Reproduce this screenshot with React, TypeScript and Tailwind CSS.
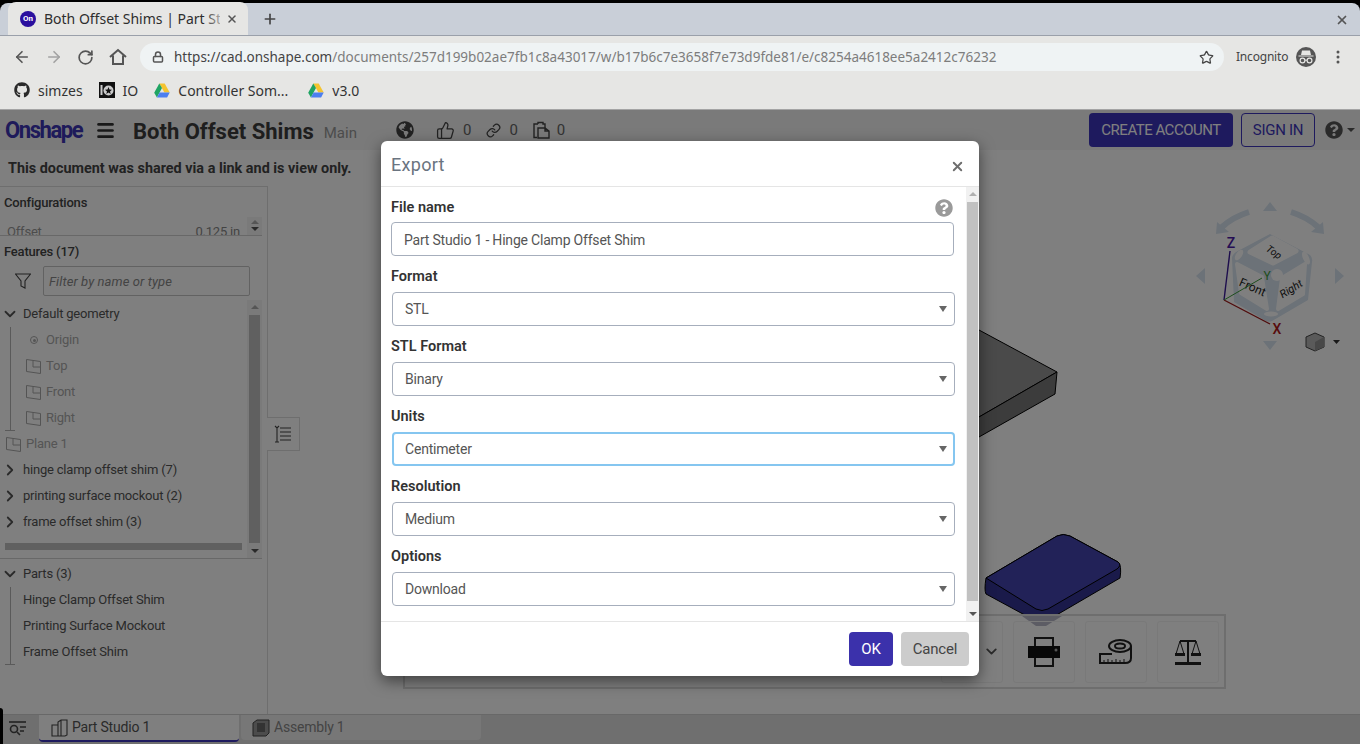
import React from "react";
import { ArrowLeft, ArrowRight, RotateCw, Lock, Star, X, Plus, ThumbsUp, Link as LinkIcon, ChevronDown, ChevronRight, Menu } from "lucide-react";
import { FaGithub, FaQuestionCircle, FaGlobeAmericas } from "react-icons/fa";

const chromeFont = "font-['Noto_Sans',sans-serif]";

function Drive() {
  return (
    <svg width="16" height="15" viewBox="0 0 16 15">
      <polygon points="5.3,0.5 10.7,0.5 15.7,9.5 10.4,9.5" fill="#f4c430" />
      <polygon points="5.3,0.5 8,5 2.9,14.5 0.2,9.8" fill="#1fa463" />
      <polygon points="5.6,9.5 15.7,9.5 13.1,14.5 2.9,14.5" fill="#4c7ff0" />
    </svg>
  );
}

function TabBar() {
  return (
    <div className="h-[33px] bg-[#c9cfd8] rounded-t-[8px] flex items-end relative border-b border-[#9aa0aa]">
      <div className="ml-[8px] w-[240px] h-[33px] bg-[#e6e6e4] rounded-t-[8px] flex items-center relative pl-[12px]">
        <div className="w-[16px] h-[16px] rounded-full bg-[#2a0f9e] text-white text-[8px] font-bold flex items-center justify-center font-['Roboto',sans-serif]">On</div>
        <span className="ml-[8px] w-[176px] overflow-hidden whitespace-nowrap text-[14px] text-[#2e2e2e]">Both Offset Shims | Part Studio 1</span>
        <div className="absolute left-[196px] top-0 w-[24px] h-[33px] bg-gradient-to-r from-transparent to-[#e6e6e4]" />
        <X size={12} strokeWidth={3} className="ml-[6px] text-[#555]" />
      </div>
      <Plus size={16} strokeWidth={2.5} className="ml-[14px] mb-[8px] text-[#444]" />
      <X size={14} strokeWidth={3} className="absolute right-[11px] top-[10px] text-[#555]" />
    </div>
  );
}

function AddressBar() {
  return (
    <div className="h-[36px] pt-[6px] bg-[#e6e6e4] flex items-center">
      <ArrowLeft size={18} strokeWidth={2.2} className="ml-[13px] text-[#555]" />
      <ArrowRight size={18} strokeWidth={2.2} className="ml-[14px] text-[#a2a2a2]" />
      <RotateCw size={17} strokeWidth={2.4} className="ml-[14px] text-[#555]" />
      <svg width="18" height="18" viewBox="0 0 18 18" fill="none" stroke="#555" strokeWidth="2" className="ml-[15px]">
        <path d="M1 9l8-7 8 7M4 7.500V16h10V7.500" />
      </svg>
      <div className="ml-[13px] w-[1084px] h-[28px] rounded-full bg-[#eff3f4] flex items-center relative">
        <Lock size={12} strokeWidth={3} className="ml-[12px] text-[#555]" />
        <span className="ml-[10px] text-[13.500px] whitespace-nowrap text-[#7d7d7d]"><span className="text-[#444]">https://cad.onshape.com</span>/documents/257d199b02ae7fb1c8a43017/w/b17b6c7e3658f7e73d9fde81/e/c8254a4618ee5a2412c76232</span>
        <Star size={15} strokeWidth={2} className="absolute right-[10px] text-[#444]" />
      </div>
      <span className="ml-[12px] w-[52px] text-[12px] tracking-[-0.2px] text-[#444] whitespace-nowrap">Incognito</span>
      <svg width="20" height="20" viewBox="0 0 20 20" className="ml-[8px]">
        <circle cx="10" cy="10" r="10" fill="#555" />
        <path d="M6 3.5h8l1 4.5H5z M2.500 8.500h15v1h-15z" fill="#e6e6e4" />
        <circle cx="6.500" cy="13.500" r="2.400" fill="none" stroke="#e6e6e4" strokeWidth="1.200" />
        <circle cx="13.500" cy="13.500" r="2.400" fill="none" stroke="#e6e6e4" strokeWidth="1.200" />
        <path d="M8.900 13.200h2.200" stroke="#e6e6e4" strokeWidth="1" />
      </svg>
      <svg width="4" height="14" viewBox="0 0 4 14" className="ml-[20px]">
        <circle cx="2" cy="2" r="1.500" fill="#555" />
        <circle cx="2" cy="7" r="1.500" fill="#555" />
        <circle cx="2" cy="12" r="1.500" fill="#555" />
      </svg>
    </div>
  );
}

function Bookmarks() {
  return (
    <div className="h-[38px] bg-[#e6e6e4] border-b border-[#a4a4a4] flex items-center text-[14px] text-[#333] pb-[1px]">
      <FaGithub size={16} className="ml-[14px] text-[#2a2a2a]" />
      <span className="ml-[8px]">simzes</span>
      <svg width="16" height="16" viewBox="0 0 16 16" className="ml-[16px]">
        <rect width="16" height="16" fill="#111" />
        <circle cx="9.500" cy="8.500" r="5" fill="#ccc" />
        <polygon points="9.500,5 10.500,7.600 13,7.800 11,9.500 11.700,12 9.500,10.600 7.300,12 8,9.500 6,7.800 8.500,7.600" fill="#111" />
        <rect x="1.500" y="3" width="2" height="10" fill="#ccc" />
      </svg>
      <span className="ml-[8px]">IO</span>
      <span className="ml-[16px]"><Drive /></span>
      <span className="ml-[8px] w-[110px] whitespace-nowrap">Controller Som...</span>
      <span className="ml-[20px]"><Drive /></span>
      <span className="ml-[8px]">v3.0</span>
    </div>
  );
}

function PageHeader() {
  return (
    <div className="h-[40px] bg-[#f4f4f4] flex items-center relative">
      <span className="ml-[5px] w-[80px] text-[24px] leading-[30px] font-bold tracking-[-1.6px] text-[#3c34b4] whitespace-nowrap scale-x-[0.92] origin-left">Onshape</span>
      <Menu size={21} strokeWidth={3} className="ml-[10px] text-[#333]" />
      <span className="ml-[17px] mt-[3px] text-[22px] leading-[28px] font-bold text-[#3c3c3c] whitespace-nowrap">Both Offset Shims</span>
      <span className="ml-[10px] mt-[6px] text-[15px] text-[#999]">Main</span>
      <FaGlobeAmericas size={18} className="ml-[39px] text-[#444]" />
      <ThumbsUp size={19} strokeWidth={1.6} className="ml-[22px] text-[#444]" />
      <span className="ml-[8px] text-[15px] text-[#666]">0</span>
      <LinkIcon size={15} strokeWidth={2} className="ml-[15px] text-[#444]" />
      <span className="ml-[8px] text-[15px] text-[#666]">0</span>
      <svg width="18" height="18" viewBox="0 0 18 18" fill="none" stroke="#444" strokeWidth="1.400" className="ml-[15px]">
        <path d="M4 16.500H1V3h4M5 3V1.500h5V3h2v4" />
        <path d="M5 7h7l4 3v7H5z M12 7v3h4" />
      </svg>
      <span className="ml-[6px] text-[15px] text-[#666]">0</span>
      <div className="ml-auto mr-[8px] w-[144px] h-[34px] rounded-[4px] bg-[#3c34bc] text-[#fff] text-[15px] tracking-[-0.5px] flex items-center justify-center">CREATE ACCOUNT</div>
      <div className="mr-[10px] w-[74px] h-[34px] rounded-[4px] border border-[#3c34bc] text-[#3c34bc] text-[15px] tracking-[-0.3px] flex items-center justify-center">SIGN IN</div>
      <FaQuestionCircle size={18} className="mr-[4px] text-[#555]" />
      <div className="mr-[5px] w-0 h-0 border-x-[4px] border-x-transparent border-t-[4px] border-t-[#555]" />
    </div>
  );
}

function PlaneIcon() {
  return (
    <svg width="15" height="15" viewBox="0 0 15 15" fill="none" stroke="#a8a8a8" strokeWidth="1">
      <path d="M0.500 0.500l14 2v12l-14-2z M7 1.500v6.500h7.500" />
    </svg>
  );
}

function Row({ children, className = "" }: { children: React.ReactNode; className?: string }) {
  return <div className={`h-[26px] flex items-center whitespace-nowrap ${className}`}>{children}</div>;
}

function Panel() {
  return (
    <div className="w-[268px] border-t border-r border-[#dcdcdc] relative flex flex-col text-[13px] tracking-[-0.2px] text-[#555]">
      <div className="h-[49px] border-b border-[#d0d0d0] w-[262px] relative overflow-hidden">
        <div className="ml-[4px] mt-[6px] font-medium text-[13px] text-[#444]">Configurations</div>
        <div className="absolute left-[7px] top-[35px] text-[#999] flex w-[233px] justify-between"><span>Offset</span><span className="text-[#888]">0.125 in</span></div>
        <div className="absolute right-0 top-[30px] w-[15px] h-[18px] bg-[#f4f4f4] flex flex-col items-center gap-[3px] pt-[3px]">
          <div className="w-0 h-0 border-x-[4px] border-x-transparent border-b-[4px] border-b-[#aaa]" />
          <div className="w-0 h-0 border-x-[4px] border-x-transparent border-t-[4px] border-t-[#555]" />
        </div>
      </div>
      <div className="h-[32px] ml-[4px] flex items-center font-medium text-[13px] text-[#444]">Features (17)</div>
      <div className="h-[35px] mt-[-5px] flex items-center">
        <svg width="16" height="16" viewBox="0 0 16 16" fill="none" stroke="#444" strokeWidth="1.100" className="ml-[15px]"><path d="M0.500 1h15L10 8v7l-4-2V8z" /></svg>
        <div className="ml-[12px] w-[207px] h-[30px] border border-[#c4c4c4] rounded-[2px] flex items-center pl-[5px] pt-[2px] italic tracking-[0.1px] text-[#888]">Filter by name or type</div>
      </div>
      <div className="w-[262px] h-[259px] mt-[2px] border-b border-[#d0d0d0] relative">
        <div className="pt-[1px]">
          <Row><ChevronDown size={18} strokeWidth={2.400} className="ml-[1px] mr-[4px] text-[#555]" />Default geometry</Row>
          <div className="relative text-[#aaa]">
            <div className="absolute left-[10px] top-0 h-[103px] w-px bg-[#b4b4b4]" />
            <div className="absolute left-[5px] top-[103px] w-[10px] h-px bg-[#b4b4b4]" />
            <Row className="pl-[30px]"><span className="w-[8px] h-[8px] rounded-full border border-[#aaa] mr-[8px] flex items-center justify-center"><span className="w-[3px] h-[3px] rounded-full bg-[#aaa]" /></span>Origin</Row>
            <Row className="pl-[26px]"><PlaneIcon /><span className="ml-[5px]">Top</span></Row>
            <Row className="pl-[26px]"><PlaneIcon /><span className="ml-[5px]">Front</span></Row>
            <Row className="pl-[26px]"><PlaneIcon /><span className="ml-[5px]">Right</span></Row>
            <Row className="pl-[6px]"><PlaneIcon /><span className="ml-[5px]">Plane 1</span></Row>
          </div>
          {["hinge clamp offset shim (7)", "printing surface mockout (2)", "frame offset shim (3)"].map((t) => (
            <Row key={t}><ChevronRight size={18} strokeWidth={2.400} className="ml-[1px] mr-[4px] text-[#555]" />{t}</Row>
          ))}
        </div>
        <div className="absolute left-[5px] top-[243px] w-[237px] h-[7px] bg-[#c1c1c1]" />
        <div className="absolute right-0 top-0 w-[15px] h-[258px] bg-[#f4f4f4] flex flex-col items-center justify-between py-[5px]">
          <div className="w-0 h-0 border-x-[4px] border-x-transparent border-b-[4px] border-b-[#aaa]" />
          <div className="w-[11px] h-[228px] bg-[#c1c1c1]" />
          <div className="w-0 h-0 border-x-[4px] border-x-transparent border-t-[4px] border-t-[#555]" />
        </div>
      </div>
      <div className="pt-[2px] relative">
        <Row><ChevronDown size={18} strokeWidth={2.400} className="ml-[1px] mr-[4px] text-[#555]" />Parts (3)</Row>
        <div className="relative">
          <div className="absolute left-[10px] top-0 h-[77px] w-px bg-[#b4b4b4]" />
          <div className="absolute left-[5px] top-[77px] w-[10px] h-px bg-[#b4b4b4]" />
          {["Hinge Clamp Offset Shim", "Printing Surface Mockout", "Frame Offset Shim"].map((t) => (
            <Row key={t} className="pl-[23px]">{t}</Row>
          ))}
        </div>
      </div>
      <div className="absolute left-[267px] top-[230px] w-[33px] h-[34px] bg-white border border-l-0 border-[#dcdcdc] flex items-center justify-center">
        <svg width="18" height="18" viewBox="0 0 18 18" fill="none" stroke="#444" strokeWidth="1.100"><path d="M1 1l2 2 2-2M3 3v14M1 17h4M6 3h11M6 7h11M6 11h11M6 15h11" /></svg>
      </div>
    </div>
  );
}

function Canvas() {
  return (
    <div className="flex-1 relative">
      <svg width="1092" height="528" viewBox="268 186 1092 528" className="absolute inset-0">
        <polygon points="900,290 979,330 1057,372 979,417 900,460" fill="#949494" stroke="#000" strokeWidth="1" />
        <polygon points="900,460 979,417 1057,372 1055,394 979,437 900,480" fill="#787878" stroke="#000" strokeWidth="1" />
        <path d="M986,578 L1057,536 Q1063,533 1070,536 L1118,562 Q1122,565 1120,578 L1048,620 Q1042,623 1034,620 L986,594 Q984,590 986,578 Z" fill="#343494" stroke="#000" strokeWidth="1" />
        <path d="M986,578 L1057,536 Q1063,533 1070,536 L1118,562 Q1122,565 1117,569 L1048,609 Q1042,612 1036,609 Z" fill="#4444b0" stroke="#000" strokeWidth="1" />
        <polygon points="1022,616 1062,616 1046,626 1036,626" fill="#b8b8c8" />
        <g fill="#d8e4f0">
          <polygon points="1270,202 1277,211 1263,211" />
          <polygon points="1270,350 1277,341 1263,341" />
          <polygon points="1196,276 1205,268 1205,284" />
          <polygon points="1344,276 1335,268 1335,284" />
          <polygon points="1216,234 1217,222 1229,232" />
          <polygon points="1324,234 1323,222 1311,232" />
        </g>
        <g fill="none" stroke="#d8e4f0" strokeWidth="6">
          <path d="M1249,212 Q1233,217 1222,227" />
          <path d="M1291,212 Q1307,217 1318,227" />
        </g>
        <path d="M1270,234 L1310,255 Q1313,258 1312,262 L1308,300 L1272,321 Q1270,322 1266,321 L1234,302 L1232,258 Q1232,255 1236,252 Z" fill="#d8e4f0" />
        <polygon points="1272,238 1296,251 1273,263 1250,252" fill="#ffffff" stroke="#ffffff" strokeWidth="5" strokeLinejoin="round" />
        <polygon points="1237,264 1262,277 1267,309 1241,293" fill="#ffffff" stroke="#ffffff" strokeWidth="4" strokeLinejoin="round" />
        <polygon points="1305,264 1282,278 1278,309 1303,294" fill="#ffffff" stroke="#ffffff" strokeWidth="4" strokeLinejoin="round" />
        <circle cx="1277" cy="275" r="6" fill="#fff" />
        <ellipse cx="1239" cy="255" rx="3" ry="6" fill="#fff" transform="rotate(35 1239 255)" />
        <ellipse cx="1306" cy="258" rx="3" ry="7" fill="#fff" transform="rotate(-25 1306 258)" />
        <ellipse cx="1271" cy="314" rx="7" ry="2.500" fill="#fff" />
        <text x="1272" y="255" fontSize="10" fontStyle="italic" fill="#222" textAnchor="middle" fontFamily="Roboto, sans-serif" transform="rotate(35 1272 255)">Top</text>
        <text x="1251" y="291" fontSize="12" fill="#222" textAnchor="middle" fontFamily="Roboto, sans-serif" transform="rotate(24 1251 291)">Front</text>
        <text x="1293" y="292" fontSize="11" fontStyle="italic" fill="#222" textAnchor="middle" fontFamily="Roboto, sans-serif" transform="rotate(-32 1293 292)">Right</text>
        <path d="M1224,300 L1230,251" stroke="#3a1a9a" strokeWidth="1.400" />
        <path d="M1224,300 L1270,324" stroke="#a01818" strokeWidth="1.400" />
        <path d="M1224,300 L1262,278" stroke="#3c9c3c" strokeWidth="1" />
        <text x="1231" y="248" fontSize="14" fontWeight="500" fill="#4a1aa8" textAnchor="middle" fontFamily="Roboto, sans-serif">Z</text>
        <text x="1277" y="334" fontSize="14" fontWeight="500" fill="#b01818" textAnchor="middle" fontFamily="Roboto, sans-serif">X</text>
        <text x="1267" y="280" fontSize="12" fill="#3c9c3c" textAnchor="middle" fontFamily="Roboto, sans-serif">Y</text>
        <polygon points="1315,333 1324,337 1324,347 1315,351 1306,347 1306,337" fill="#b4b4b4" stroke="#444" strokeWidth="1" />
        <polygon points="1315,342 1324,337 1324,347 1315,351" fill="#909090" />
        <polygon points="1333,340 1340,340 1336.500,344" fill="#333" />
      </svg>
      <div className="absolute left-[135px] top-[428px] w-[823px] h-[75px] border-2 border-[#dcdcdc] flex items-center justify-end pr-[5px] gap-[10px]">
        <div className="w-[62px] h-[62px] rounded-[3px] border border-[#f2f2f2] flex items-center justify-end pr-[2px]">
          <ChevronDown size={17} strokeWidth={2.600} className="text-[#555]" />
        </div>
        <div className="w-[62px] h-[62px] rounded-[3px] border border-[#f2f2f2] flex items-center justify-center">
          <svg width="32" height="30" viewBox="0 0 32 30">
            <path d="M7 9V1h18v8 M7 21v8h18v-8" fill="none" stroke="#222" strokeWidth="2" />
            <path d="M0 9h32v12H0z" fill="#111" />
            <circle cx="28" cy="13" r="1.500" fill="#aaa" />
          </svg>
        </div>
        <div className="w-[62px] h-[62px] rounded-[3px] border border-[#f2f2f2] flex items-center justify-center">
          <svg width="34" height="26" viewBox="0 0 34 26" fill="none" stroke="#222" strokeWidth="2">
            <ellipse cx="21" cy="7" rx="11" ry="6" />
            <ellipse cx="21" cy="7" rx="5" ry="2.500" />
            <path d="M32 7v12q0 5-6 5H1v-9h12" />
            <path d="M5 24v-3M9 24v-4M13 24v-3M17 24v-4M21 24v-3M25 24v-4" strokeWidth="1" />
          </svg>
        </div>
        <div className="w-[62px] h-[62px] rounded-[3px] border border-[#f2f2f2] flex items-center justify-center">
          <svg width="26" height="26" viewBox="0 0 26 26" fill="none" stroke="#222" strokeWidth="1">
            <path d="M5 2h16" strokeWidth="2" />
            <path d="M13 1v22" strokeWidth="2" />
            <path d="M0 24.500h26" strokeWidth="3" />
            <path d="M5 2L1 15M5 2l4 13M21 2l-4 13M21 2l4 13" />
            <path d="M0 15.500h10M16 15.500h10" strokeWidth="3" />
          </svg>
        </div>
      </div>
    </div>
  );
}

function BottomBar() {
  return (
    <div className="h-[30px] bg-[#dedede] border-t border-[#d0d0d0] flex items-start text-[14px] tracking-[-0.2px] relative">
      <div className="absolute left-0 bottom-0 w-[3px] h-[36px] rounded-tr-[4px] bg-black" />
      <svg width="17" height="15" viewBox="0 0 17 15" fill="none" stroke="#444" strokeWidth="1.600" className="ml-[9px] mt-[6px]">
        <path d="M0 1h17" /><circle cx="5" cy="8" r="3.500" /><path d="M8 11l3 3M11 6h6M11 10h4" />
      </svg>
      <div className="ml-[13px] w-[200px] h-[27px] bg-white rounded-b-[4px] border-b-2 border-[#3c34bc] flex items-center text-[#555] pl-[12px]">
        <svg width="18" height="18" viewBox="0 0 18 18" fill="none" stroke="#444" strokeWidth="1.100" className="mr-[3px]"><path d="M1 6h6v11H1z M7 9V3l3-2h6v15l-2 1H7 M10 1v16" /></svg>
        Part Studio 1
      </div>
      <div className="ml-[2px] w-[240px] h-[25px] bg-[#eeeeee] rounded-b-[4px] flex items-center text-[#888] pl-[11px]">
        <svg width="18" height="18" viewBox="0 0 18 18" className="mr-[4px]"><path d="M1 4l4-3h12v13l-3 3H1z" fill="#999" stroke="#444" strokeWidth="1" /><path d="M5 4h8v9H5z" fill="#666" /></svg>
        Assembly 1
      </div>
    </div>
  );
}

function Field({ label, value, focus }: { label: string; value: string; focus?: boolean }) {
  return (
    <div className="mb-[10px]">
      <div className="h-[21px] pt-[1px] mb-[5px] flex items-center font-semibold text-[14.500px] text-[#333]">{label}</div>
      <div className={`ml-px w-[563px] h-[34px] rounded-[4px] flex items-center justify-between text-[14px] tracking-[-0.2px] text-[#555] ${focus ? "border-2 border-[#85c6f0] pl-[11px] pr-[6px]" : "border border-[#a6aebc] pl-[12px] pr-[7px]"}`}>
        {value}
        <div className="w-0 h-0 border-x-[4px] border-x-transparent border-t-[6px] border-t-[#666]" />
      </div>
    </div>
  );
}

function Modal() {
  return (
    <div className="absolute left-[381px] top-[141px] w-[598px] h-[535px] bg-white rounded-[6px] shadow-[0_5px_15px_rgba(0,0,0,0.5)] flex flex-col overflow-hidden">
      <div className="h-[46px] border-b border-[#e5e5e5] flex items-center justify-between pl-[10px] pr-[14px] shrink-0">
        <span className="mt-[2px] text-[18px] text-[#6a7480] tracking-[0.3px]">Export</span>
        <X size={15} strokeWidth={3} className="mt-[6px] text-[#6e6e6e]" />
      </div>
      <div className="h-[434px] flex shrink-0">
        <div className="w-[584px] pl-[10px] pt-[10px]">
          <div className="mb-[10px]">
            <div className="h-[21px] pt-[1px] mb-[4px] flex items-center justify-between font-semibold text-[14.500px] text-[#333] w-[562px]">
              File name
              <FaQuestionCircle size={18} className="text-[#9a9a9a]" />
            </div>
            <div className="w-[563px] h-[34px] rounded-[4px] border border-[#a6aebc] flex items-center pl-[12px] pt-[2px] text-[14px] tracking-[-0.2px] text-[#555]">Part Studio 1 - Hinge Clamp Offset Shim</div>
          </div>
          <Field label="Format" value="STL" />
          <Field label="STL Format" value="Binary" />
          <Field label="Units" value="Centimeter" focus />
          <Field label="Resolution" value="Medium" />
          <Field label="Options" value="Download" />
        </div>
        <div className="w-[14px] bg-[#f1f1f1] border-l border-white flex flex-col items-center pt-[5px] pb-[5px]">
          <div className="w-0 h-0 border-x-[4px] border-x-transparent border-b-[4px] border-b-[#b0b0b0]" />
          <div className="mt-[6px] w-[11px] h-[399px] bg-[#c1c1c1]" />
          <div className="mt-auto w-0 h-0 border-x-[4px] border-x-transparent border-t-[4px] border-t-[#555]" />
        </div>
      </div>
      <div className="flex-1 border-t border-[#e5e5e5] flex items-center justify-end gap-[8px] pr-[10px]">
        <div className="w-[44px] h-[34px] rounded-[4px] bg-[#3b31ab] text-white text-[15px] flex items-center justify-center">OK</div>
        <div className="w-[68px] h-[34px] rounded-[4px] bg-[#cccccc] text-[#444] text-[15px] tracking-[-0.2px] flex items-center justify-center">Cancel</div>
      </div>
    </div>
  );
}

export default function App() {
  return (
    <div className="w-[1360px] h-[744px] overflow-hidden relative bg-black font-['Roboto',sans-serif]">
      <div className={`pt-[3px] ${chromeFont}`}>
        <TabBar />
        <AddressBar />
        <Bookmarks />
      </div>
      <div className="h-[634px] bg-white flex flex-col relative">
        <PageHeader />
        <div className="h-[36px] flex items-center pl-[8px] pt-[2px] font-bold text-[14.400px] text-[#444]">This document was shared via a link and is view only.</div>
        <div className="flex-1 flex min-h-0">
          <Panel />
          <Canvas />
        </div>
        <BottomBar />
        <div className="absolute inset-0 bg-black/50" />
      </div>
      <Modal />
    </div>
  );
}
